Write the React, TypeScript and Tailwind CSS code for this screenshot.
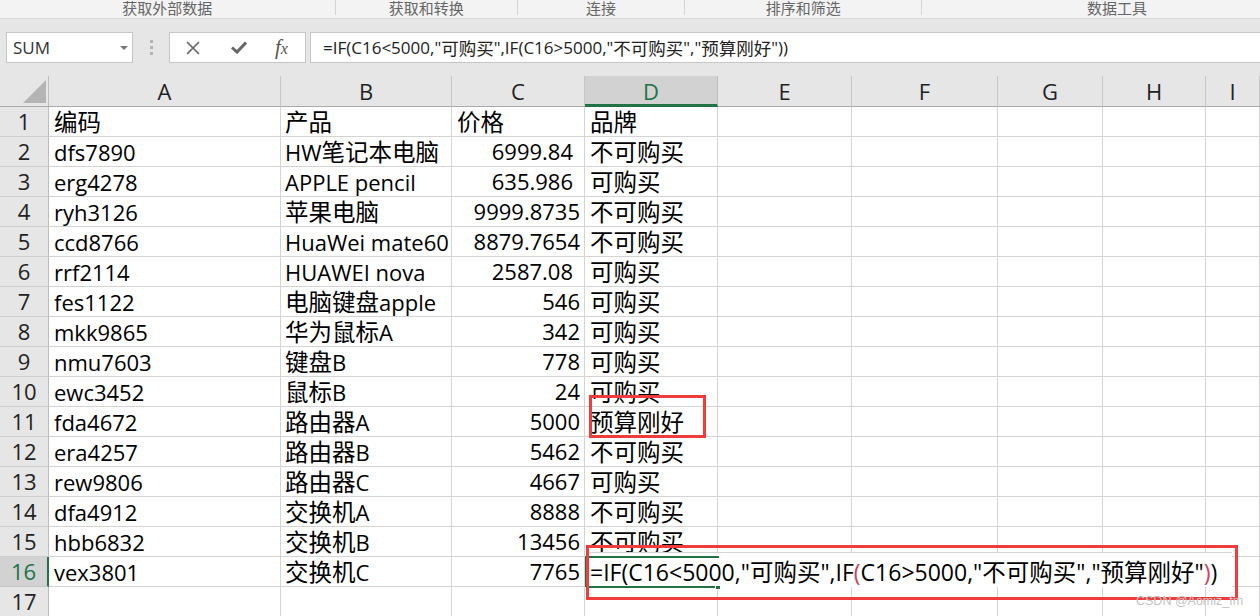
import React from "react";

const rows: string[][] = [
  ["编码", "产品", "价格", "品牌"],
  ["dfs7890", "HW笔记本电脑", "6999.84", "不可购买"],
  ["erg4278", "APPLE pencil", "635.986", "可购买"],
  ["ryh3126", "苹果电脑", "9999.8735", "不可购买"],
  ["ccd8766", "HuaWei mate60", "8879.7654", "不可购买"],
  ["rrf2114", "HUAWEI nova", "2587.08", "可购买"],
  ["fes1122", "电脑键盘apple", "546", "可购买"],
  ["mkk9865", "华为鼠标A", "342", "可购买"],
  ["nmu7603", "键盘B", "778", "可购买"],
  ["ewc3452", "鼠标B", "24", "可购买"],
  ["fda4672", "路由器A", "5000", "预算刚好"],
  ["era4257", "路由器B", "5462", "不可购买"],
  ["rew9806", "路由器C", "4667", "可购买"],
  ["dfa4912", "交换机A", "8888", "不可购买"],
  ["hbb6832", "交换机B", "13456", "不可购买"],
  ["vex3801", "交换机C", "7765", ""],
  ["", "", "", ""],
];

const wideNum = new Set([2, 3, 6]);

function T({ s, big }: { s: string; big?: boolean }) {
  const parts = s.split(/([\u4e00-\u9fff]+)/);
  return (
    <>
      {parts.map((p, i) =>
        /[\u4e00-\u9fff]/.test(p) ? (
          <span
            key={i}
            className={
              big
                ? "font-['Noto_Sans_CJK_SC',sans-serif] text-[23.5px] leading-none"
                : "font-['Noto_Sans_CJK_SC',sans-serif] text-[17.5px] leading-none"
            }
          >
            {p}
          </span>
        ) : (
          <span key={i} className="leading-none">
            {p}
          </span>
        )
      )}
    </>
  );
}

const cols = ["A", "B", "C", "D", "E", "F", "G", "H", "I"];

export default function App() {
  return (
    <div className="relative w-[1260px] h-[616px] overflow-hidden bg-white font-['Open_Sans','Noto_Sans_CJK_SC',sans-serif] text-black">
      {/* ribbon group labels */}
      <div className="flex h-[19px] bg-[#f3f3f3] border-b border-[#d6d6d6] text-[15px] leading-[16px] text-[#666] font-['Noto_Sans_CJK_SC',sans-serif]">
        <div className="w-[335px] text-center">获取外部数据</div>
        <div className="w-px h-[15px] bg-[#d4d4d4]" />
        <div className="w-[181px] text-center">获取和转换</div>
        <div className="w-px h-[15px] bg-[#d4d4d4]" />
        <div className="w-[167px] text-center">连接</div>
        <div className="w-px h-[15px] bg-[#d4d4d4]" />
        <div className="w-[236px] text-center">排序和筛选</div>
        <div className="w-px h-[15px] bg-[#d4d4d4]" />
        <div className="w-[338px] pl-[52px] text-center">数据工具</div>
      </div>

      {/* formula bar */}
      <div className="flex items-center h-[57px] bg-[#e6e6e6] pl-[6px]">
        <div className="relative flex items-center w-[127px] h-[31px] bg-white border border-[#c6c6c6] pl-[6px] text-[17px] text-[#333]">
          SUM
          <svg className="absolute left-[113px] top-[13px]" width="8" height="5" viewBox="0 0 8 5">
            <path d="M0 0 L8 0 L4 4 Z" fill="#777" />
          </svg>
        </div>
        <div className="flex flex-col gap-[3px] ml-[17px] mr-[16px]">
          <div className="w-[3px] h-[3px] bg-[#b4b4b4]" />
          <div className="w-[3px] h-[3px] bg-[#b4b4b4]" />
          <div className="w-[3px] h-[3px] bg-[#b4b4b4]" />
        </div>
        <div className="flex items-center w-[137px] h-[31px] bg-white border border-[#c6c6c6]">
          <svg className="ml-[16px]" width="14" height="14" viewBox="0 0 14 14">
            <path d="M1 1 L13 13 M13 1 L1 13" stroke="#666" strokeWidth="1.7" />
          </svg>
          <svg className="ml-[31px]" width="16" height="13" viewBox="0 0 16 13">
            <path d="M1 6.5 L6 11 L15 1.5" stroke="#666" strokeWidth="3" fill="none" />
          </svg>
          <span className="ml-[28px] font-['Liberation_Serif',serif] italic text-[21px] text-[#555] leading-none">
            f<span className="text-[16px]">x</span>
          </span>
        </div>
        <div className="flex items-center flex-1 h-[31px] ml-[4px] bg-white border border-[#c6c6c6] border-r-0 pl-[12px] text-[17px] text-[#222] whitespace-nowrap">
          <T s={'=IF(C16<5000,"可购买",IF(C16>5000,"不可购买","预算刚好"))'} />
        </div>
      </div>

      {/* sheet grid */}
      <div className="grid grid-cols-[49px_232px_171px_133px_133px_134px_146px_105px_103px_54px] text-[22px]">
        {/* header row */}
        <div className="relative h-[31px] bg-[#e6e6e6] border-r border-b border-r-[#bdbdbd] border-b-[#ababab]">
          <svg className="absolute left-[23px] top-[4px]" width="24" height="24" viewBox="0 0 24 24">
            <path d="M23 0 L23 23 L0 23 Z" fill="#b4b4b4" />
          </svg>
        </div>
        {cols.map((c) =>
          c === "D" ? (
            <div
              key={c}
              className="h-[31px] flex items-center justify-center bg-[#d2d2d2] border-r border-b-[3px] border-r-[#bdbdbd] border-b-[#217346] text-[#217346] pt-[3px]"
            >
              {c}
            </div>
          ) : (
            <div
              key={c}
              className="h-[31px] flex items-center justify-center bg-[#e6e6e6] border-r border-b border-r-[#c6c6c6] border-b-[#ababab] text-[#222]"
            >
              {c}
            </div>
          )
        )}

        {rows.map((r, i) => {
          const n = i + 1;
          const sel = n === 16;
          return (
            <React.Fragment key={n}>
              {sel ? (
                <div className="h-[30px] flex items-center justify-center bg-[#d2d2d2] border-r-2 border-b border-r-[#217346] border-b-[#c6c6c6] text-[#217346]">
                  {n}
                </div>
              ) : (
                <div className="h-[30px] flex items-center justify-center bg-[#e6e6e6] border-r border-b border-r-[#bdbdbd] border-b-[#cdcdcd] text-[#222]">
                  {n}
                </div>
              )}
              <div className="h-[30px] flex items-center pl-[5px] border-r border-b border-[#d4d4d4] whitespace-nowrap overflow-hidden">
                <T s={r[0]} big />
              </div>
              <div className="h-[30px] flex items-center pl-[4px] border-r border-b border-[#d4d4d4] whitespace-nowrap overflow-hidden">
                <T s={r[1]} big />
              </div>
              {n === 1 ? (
                <div className="h-[30px] flex items-center pl-[5px] border-r border-b border-[#d4d4d4] whitespace-nowrap overflow-hidden">
                  <T s={r[2]} big />
                </div>
              ) : wideNum.has(n) ? (
                <div className="h-[30px] flex items-center justify-end pr-[11px] border-r border-b border-[#d4d4d4] whitespace-nowrap overflow-hidden">
                  {r[2]}
                </div>
              ) : (
                <div className="h-[30px] flex items-center justify-end pr-[4px] border-r border-b border-[#d4d4d4] whitespace-nowrap overflow-hidden">
                  {r[2]}
                </div>
              )}
              <div className="h-[30px] flex items-center pl-[5px] border-r border-b border-[#d4d4d4] whitespace-nowrap overflow-hidden">
                <T s={r[3]} big />
              </div>
              <div className="h-[30px] border-r border-b border-[#d4d4d4]" />
              <div className="h-[30px] border-r border-b border-[#d4d4d4]" />
              <div className="h-[30px] border-r border-b border-[#d4d4d4]" />
              <div className="h-[30px] border-r border-b border-[#d4d4d4]" />
              <div className="h-[30px] border-r border-b border-[#d4d4d4]" />
            </React.Fragment>
          );
        })}
      </div>

      {/* in-cell edit box */}
      <div className="absolute left-[587px] top-[552px] w-[645px] h-[35px] bg-white border-t border-[#d4d4d4]">
        <div className="flex items-center h-[30px] mt-[4px] pl-[3px] text-[23px] whitespace-nowrap">
          <T s={'=IF(C16<5000,"可购买",IF'} big />
          <span className="text-[#d0405e] leading-none">(</span>
          <T s={'C16>5000,"不可购买","预算刚好"'} big />
          <span className="text-[#d0405e] leading-none">)</span>
          <span className="leading-none">)</span>
        </div>
      </div>

      {/* active cell green borders */}
      <div className="absolute left-[585px] top-[556px] w-[2px] h-[31px] bg-[#217346]" />
      <div className="absolute left-[587px] top-[556px] w-[132px] h-[2px] bg-[#217346]" />
      <div className="absolute left-[587px] top-[586px] w-[128px] h-[2px] bg-[#217346]" />
      <div className="absolute left-[715px] top-[585px] w-[6px] h-[5px] bg-[#217346] border border-white" />

      {/* red annotation boxes */}
      <div className="absolute left-[589px] top-[395px] w-[117px] h-[43px] border-[3px] border-[#f03c3c]" />
      <div className="absolute left-[586px] top-[545px] w-[652px] h-[55px] border-[3px] border-[#f03c3c]" />

      {/* watermark */}
      <div className="absolute left-[1136px] top-[594px] text-[12.5px] leading-[15px] text-[#c4c4c4] font-['Liberation_Sans',sans-serif]">
        CSDN @Aomiz_fm
      </div>
    </div>
  );
}
